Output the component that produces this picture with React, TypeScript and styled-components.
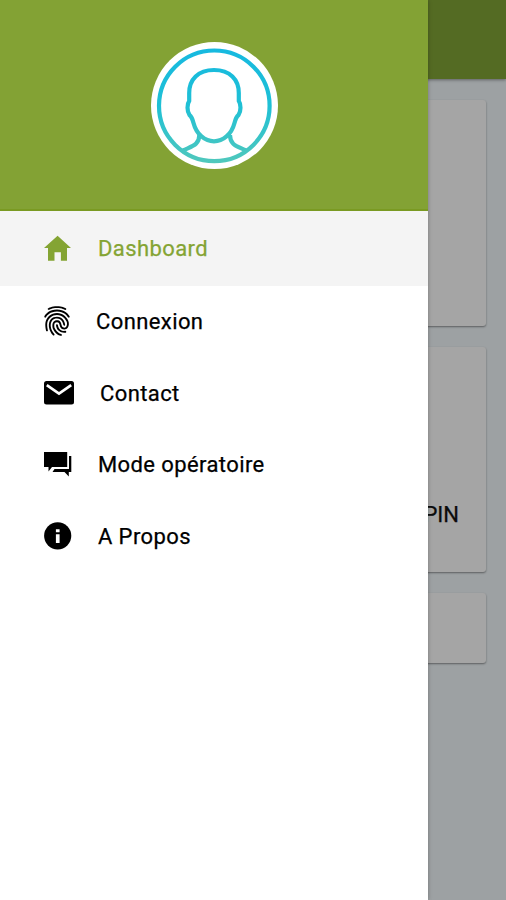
import React from 'react';
import styled, { createGlobalStyle } from 'styled-components';
import { IoMdFingerPrint } from 'react-icons/io';

const GlobalStyle = createGlobalStyle`
  * { box-sizing: border-box; }
  body { margin: 0; font-family: Roboto, "Liberation Sans", sans-serif; }
`;

const Screen = styled.div`
  position: relative;
  width: 506px;
  height: 900px;
  overflow: hidden;
  background: #9da1a3;
`;

const AppBar = styled.header`
  height: 79px;
  background: #546b23;
  box-shadow: 0 1px 3px rgba(0, 0, 0, 0.4);
`;

const CardList = styled.main`
  display: flex;
  flex-direction: column;
  gap: 21px;
  padding: 21px 20px 0;
`;

const Card = styled.section<{ $height: number }>`
  display: flex;
  justify-content: flex-end;
  align-items: flex-end;
  height: ${(p) => p.$height}px;
  padding: 0 27px 43px;
  border-radius: 3px;
  background: #a5a5a5;
  box-shadow: 0 1px 2px rgba(0, 0, 0, 0.42);
  color: #0b0b0b;
  font-size: 22px;
  -webkit-text-stroke: 0.25px currentColor;
  line-height: 28px;
`;

const Drawer = styled.aside`
  position: absolute;
  top: 0;
  left: 0;
  width: 428px;
  height: 900px;
  background: #fff;
  box-shadow: 0 0 4px rgba(0, 0, 0, 0.28);
`;

const Profile = styled.div`
  display: flex;
  justify-content: center;
  height: 211px;
  padding-top: 42px;
  background: #83a234;
  border-bottom: 2px solid #7a9a22;
`;

const Menu = styled.nav`
  display: flex;
  flex-direction: column;
`;

const MenuItem = styled.a<{ $active?: boolean; $gap: number }>`
  display: flex;
  align-items: center;
  gap: ${(p) => p.$gap}px;
  height: ${(p) => (p.$active ? 75 : 71.8)}px;
  padding: 0 0 2px 44px;
  background: ${(p) => (p.$active ? '#f4f4f4' : '#fff')};
  color: ${(p) => (p.$active ? '#84a433' : '#000')};
`;

const IconBox = styled.span<{ $width: number }>`
  display: flex;
  justify-content: center;
  align-items: center;
  flex: none;
  width: ${(p) => p.$width}px;
  height: 32px;
  svg { flex: none; }
`;

const Label = styled.span`
  padding-top: 2px;
  font-size: 22px;
  font-weight: 400;
  line-height: 28px;
  letter-spacing: 0.4px;
  -webkit-text-stroke: 0.25px currentColor;
`;

const Avatar = () => (
  <svg width="127" height="127" viewBox="0 0 127 127" fill="none">
    <defs>
      <linearGradient id="ring" gradientUnits="userSpaceOnUse" x1="0" y1="6" x2="0" y2="121">
        <stop offset="0" stopColor="#16b9e0" />
        <stop offset="0.5" stopColor="#1fc0d5" />
        <stop offset="1" stopColor="#50c8bc" />
      </linearGradient>
    </defs>
    <circle cx="63.5" cy="63.5" r="63.5" fill="#fff" />
    <g stroke="url(#ring)" strokeWidth="4.2" strokeLinejoin="round">
      <circle cx="63.3" cy="63.8" r="55.3" />
      <path d="M63 28C47 28 38.2 37.5 38.2 51V59C36 62 35.800 69 38.500 73C41 75 41.500 77 42.500 81C45.500 92.500 54 99.300 63 99.300S80.500 92.500 83.500 81C84.500 77 85 75 87.500 73C90.200 69 90 62 87.800 59V51C87.800 37.500 79 28 63 28Z" />
      <path d="M48.300 93C48.300 103 41 104 32 108.500M79 93C79 103 86 104 95 108.500" />
    </g>
  </svg>
);

const HomeIcon = () => (
  <svg width="27" height="26" viewBox="0 0 27 26" fill="currentColor">
    <path d="M13.600 0.800L27 13H23V25.800H16.900V17.300H10.500V25.800H4V13H0Z" />
  </svg>
);

const MailIcon = () => (
  <svg width="30" height="24" viewBox="0 0 30 24" fill="currentColor">
    <rect width="30" height="23.500" rx="2.500" />
    <path d="M2.800 4.200L15 12.700L27.200 4.200" fill="none" stroke="#fff" strokeWidth="2.700" />
  </svg>
);

const ChatIcon = () => (
  <svg width="28" height="26" viewBox="0 0 28 26" fill="currentColor">
    <path d="M0 1H23.200V16H8L4.500 20.500V16H0Z" />
    <path d="M25 5H27.300V21H24.800V25.500L20.500 21H8.500L10.500 18H25Z" />
  </svg>
);

const InfoIcon = () => (
  <svg width="28" height="28" viewBox="0 0 28 28">
    <circle cx="13.700" cy="13.800" r="13.600" fill="currentColor" />
    <path d="M11.900 7.200H15.600V10.300H11.900ZM11.900 12.300H15.600V21H11.900Z" fill="#fff" />
  </svg>
);

const items = [
  { label: 'Dashboard', icon: <HomeIcon />, width: 27, gap: 27, active: true },
  { label: 'Connexion', icon: <IoMdFingerPrint size={34} />, width: 26, gap: 26 },
  { label: 'Contact', icon: <MailIcon />, width: 30, gap: 26 },
  { label: 'Mode opératoire', icon: <ChatIcon />, width: 28, gap: 26 },
  { label: 'A Propos', icon: <InfoIcon />, width: 28, gap: 26 },
];

export default function App() {
  return (
    <>
      <GlobalStyle />
      <Screen>
        <AppBar />
        <CardList>
          <Card $height={226} />
          <Card $height={225}>PIN</Card>
          <Card $height={70} />
        </CardList>
        <Drawer>
          <Profile>
            <Avatar />
          </Profile>
          <Menu>
            {items.map((item) => (
              <MenuItem key={item.label} $active={item.active} $gap={item.gap}>
                <IconBox $width={item.width}>{item.icon}</IconBox>
                <Label>{item.label}</Label>
              </MenuItem>
            ))}
          </Menu>
        </Drawer>
      </Screen>
    </>
  );
}
